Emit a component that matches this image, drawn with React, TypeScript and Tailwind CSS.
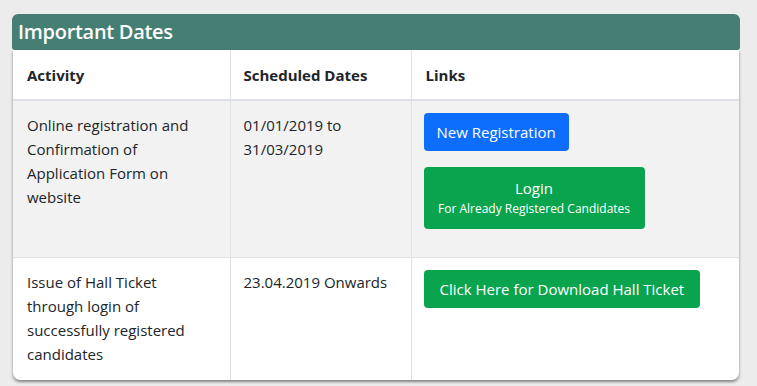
export default function App() {
  const cell = "px-[14px] pt-[12px] pb-3 align-top border-r border-[#dee2e6]";

  return (
    <div
      className="w-[757px] h-[386px] bg-[#ececec] pt-[14px] pl-[12px] text-[#212529]"
      style={{ fontFamily: '"Open Sans", "Noto Sans", sans-serif' }}
    >
      <div className="w-[728px]">
        {/* Section title bar */}
        <div className="h-[36px] bg-[#457e73] rounded-t-[6px] rounded-b-[3px] px-[6px] flex items-center">
          <h2 className="text-white text-[20px] font-semibold tracking-[-0.3px]">Important Dates</h2>
        </div>

        {/* Dates table card */}
        <div className="mx-[1px] bg-white rounded-b-[7px] overflow-hidden shadow-[0_2px_3px_rgba(0,0,0,0.45)]">
          <table className="w-full border-collapse text-[15px] leading-[24px]">
            <thead>
              <tr className="h-[50px] border-b-2 border-[#dee2e6]">
                <th className="w-[217px] px-[14px] text-left font-bold border-r border-[#dee2e6]">Activity</th>
                <th className="w-[181px] px-[13px] text-left font-bold border-r border-[#dee2e6]">Scheduled Dates</th>
                <th className="px-[14px] text-left font-bold">Links</th>
              </tr>
            </thead>
            <tbody>
              <tr className="h-[157px] bg-[#f2f2f2] border-b border-[#dee2e6]">
                <td className={cell}>
                  Online registration and Confirmation of Application Form on website
                </td>
                <td className={cell + " pl-[13px]"}>
                  01/01/2019 to
                  <br />
                  31/03/2019
                </td>
                <td className="px-[12px] pt-[12px] pb-3 align-top">
                  <div className="flex flex-col items-start gap-4">
                    <button className="h-[38px] px-[13px] rounded-[4px] bg-[#0d6efd] text-white text-[15px]">
                      New Registration
                    </button>
                    <button className="h-[62px] w-[221px] rounded-[4px] bg-[#0aa44f] text-white flex flex-col items-center justify-center">
                      <span className="text-[15px] leading-[22px]">Login</span>
                      <span className="text-[12px] leading-[20px]">For Already Registered Candidates</span>
                    </button>
                  </div>
                </td>
              </tr>
              <tr className="h-[123px]">
                <td className={cell}>
                  Issue of Hall Ticket through login of successfully registered candidates
                </td>
                <td className={cell + " pl-[13px]"}>23.04.2019 Onwards</td>
                <td className="px-[12px] pt-[12px] pb-3 align-top">
                  <button className="h-[38px] px-[16px] rounded-[4px] bg-[#0aa44f] text-white text-[15px]">
                    Click Here for Download Hall Ticket
                  </button>
                </td>
              </tr>
            </tbody>
          </table>
        </div>
      </div>
    </div>
  );
}
